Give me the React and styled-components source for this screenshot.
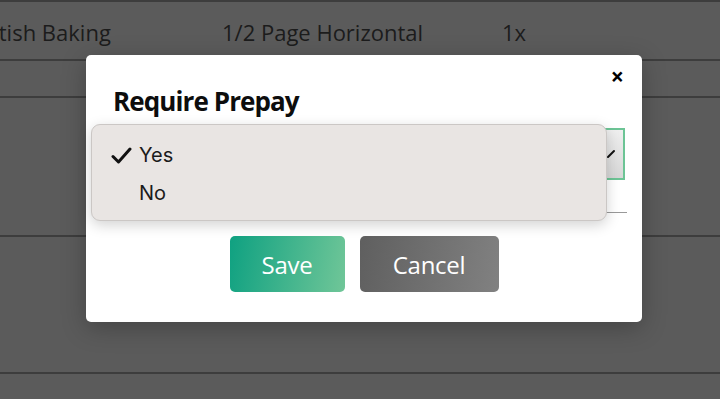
import styled, { createGlobalStyle } from "styled-components"

const GlobalStyle = createGlobalStyle`
  html, body {
    margin: 0;
    padding: 0;
    background: #5b5b5b;
    font-family: "Open Sans", "Liberation Sans", sans-serif;
  }
  #root {
    width: 720px;
    height: 399px;
    overflow: hidden;
    position: relative;
  }
`

const TableStyled = styled.div`
  border-top: 2px solid #3d3d3d;
`

const RowStyled = styled.div`
  display: grid;
  grid-template-columns: 252px 280px 1fr;
  align-items: center;
  height: ${props => props.height}px;
  border-bottom: 2px solid #3d3d3d;
  box-sizing: border-box;
  margin-left: -30px;
  font-size: 22px;
  color: #1c1c1c;
`

const CellStyled = styled.div`
  white-space: nowrap;
  padding-top: 3px;
`

const ModalStyled = styled.div`
  position: absolute;
  left: 86px;
  top: 55px;
  width: 556px;
  height: 267px;
  box-sizing: border-box;
  background: #fff;
  border-radius: 5px;
  box-shadow: 0 6px 24px rgba(0, 0, 0, 0.25);
  padding: 28px 15px 0 27px;
  display: flex;
  flex-direction: column;
`

const CloseStyled = styled.button`
  position: absolute;
  top: 9px;
  right: 18px;
  border: none;
  background: none;
  padding: 0;
  font-family: "Open Sans", sans-serif;
  font-weight: 700;
  font-size: 23px;
  line-height: 24px;
  color: #000;
`

const TitleStyled = styled.h2`
  margin: 0;
  font-size: 26px;
  font-weight: 700;
  letter-spacing: -0.9px;
  line-height: 36px;
  color: #0d0d0d;
`

const SelectStyled = styled.div`
  margin-top: 9px;
  margin-left: -8px;
  height: 52px;
  box-sizing: border-box;
  border: 2px solid #6cc495;
  background: linear-gradient(to bottom, #efefef, #d7d7d7);
  display: flex;
  justify-content: flex-end;
  align-items: center;
  padding-right: 7px;
  margin-right: 2px;
`

const FieldLineStyled = styled.div`
  margin-top: 32px;
  border-bottom: 1px solid #999;
`

const ActionsStyled = styled.div`
  display: flex;
  justify-content: center;
  gap: 15px;
  margin-top: 23px;
  margin-left: -12px;
`

const ButtonStyled = styled.button`
  width: ${props => props.width}px;
  height: 56px;
  border: none;
  border-radius: 5px;
  color: #fff;
  font-family: "Open Sans", sans-serif;
  font-size: 24px;
  letter-spacing: -0.3px;
  background: ${props => props.primary
    ? "linear-gradient(100deg, #0fa181, #70c698)"
    : "linear-gradient(100deg, #5f5f5f, #818181)"};
`

const PopupStyled = styled.div`
  position: absolute;
  left: 91px;
  top: 124px;
  width: 516px;
  height: 97px;
  box-sizing: border-box;
  background: #e9e5e3;
  border: 1px solid #cbc7c5;
  border-radius: 9px;
  box-shadow: 0 4px 14px rgba(0, 0, 0, 0.18);
  padding-top: 11px;
`

const OptionStyled = styled.div`
  display: flex;
  align-items: center;
  height: 38px;
  padding-left: 19px;
  font-family: Inter, "Liberation Sans", sans-serif;
  font-size: 20px;
  color: #1b1b1b;
  & > span {
    width: 28px;
    display: flex;
    align-items: center;
  }
`

const Check = () => (
  <svg width="21" height="17" viewBox="0 0 21 17">
    <path d="M2 9.5 L7.5 15 L19 2" fill="none" stroke="#111" strokeWidth="3" strokeLinecap="round" strokeLinejoin="round" />
  </svg>
)

const Chevron = () => (
  <svg width="10" height="10" viewBox="0 0 10 10">
    <path d="M2 8 L8 2" stroke="#111" strokeWidth="2" strokeLinecap="round" />
  </svg>
)

const App = () => {
  return (
    <>
      <GlobalStyle />
      <TableStyled>
        <RowStyled height={59}>
          <CellStyled>British Baking</CellStyled>
          <CellStyled>1/2 Page Horizontal</CellStyled>
          <CellStyled>1x</CellStyled>
        </RowStyled>
        <RowStyled height={37} />
        <RowStyled height={139} />
        <RowStyled height={137} />
      </TableStyled>

      <ModalStyled>
        <CloseStyled>×</CloseStyled>
        <TitleStyled>Require Prepay</TitleStyled>
        <SelectStyled>
          <Chevron />
        </SelectStyled>
        <FieldLineStyled />
        <ActionsStyled>
          <ButtonStyled primary width={115}>Save</ButtonStyled>
          <ButtonStyled width={139}>Cancel</ButtonStyled>
        </ActionsStyled>
      </ModalStyled>

      <PopupStyled>
        <OptionStyled>
          <span><Check /></span>
          Yes
        </OptionStyled>
        <OptionStyled>
          <span />
          No
        </OptionStyled>
      </PopupStyled>
    </>
  )
}

export default App
